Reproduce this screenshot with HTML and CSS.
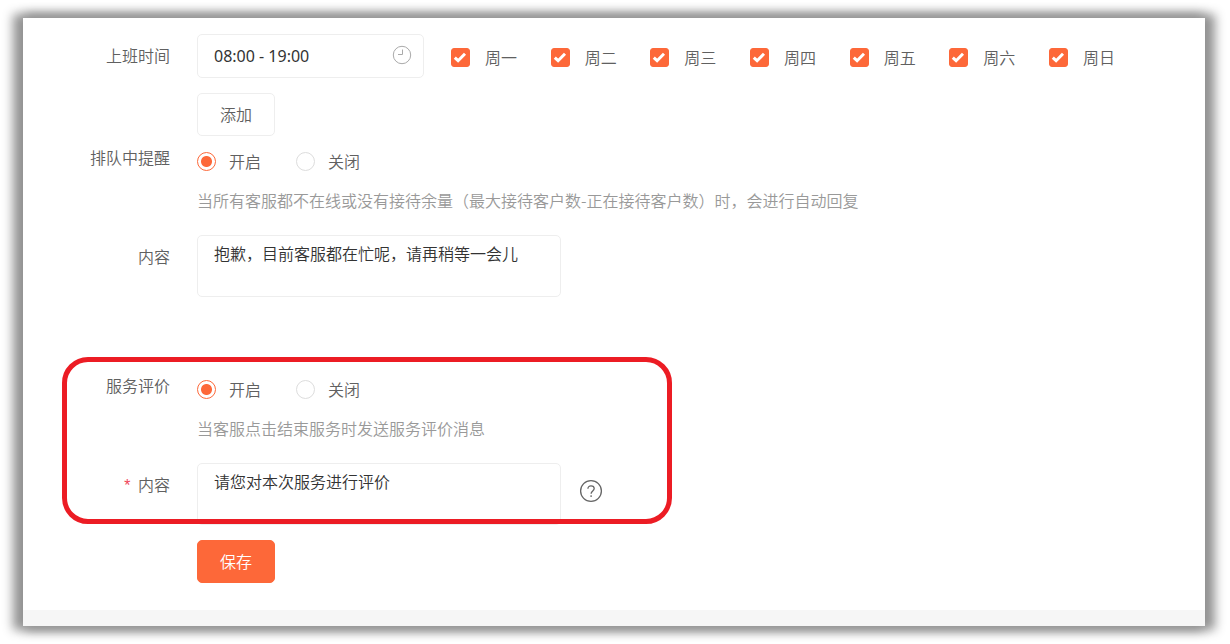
FILE: index.html
```
<!DOCTYPE html>
<html lang="zh-CN">
<head>
    <meta charset="UTF-8">
    <meta name="viewport" content="width=device-width, initial-scale=1.0">
    <title>客服设置</title>
    <link rel="stylesheet" href="styles.css">
</head>
<body>
    <main class="panel">
        <form class="settings">
            <!-- Working hours -->
            <div class="form-row">
                <label class="row-label" for="work-time">上班时间</label>
                <div class="row-body">
                    <div class="time-line">
                        <div class="time-box">
                            <input type="text" id="work-time" value="08:00 - 19:00">
                            <svg class="clock-icon" viewBox="0 0 20 20" fill="none" stroke="#aaa">
                                <circle cx="10" cy="10" r="8.7"/>
                                <path d="M10.5 4.5v5H6"/>
                            </svg>
                        </div>
                        <div class="weekdays">
                            <label><input type="checkbox" checked>周一</label>
                            <label><input type="checkbox" checked>周二</label>
                            <label><input type="checkbox" checked>周三</label>
                            <label><input type="checkbox" checked>周四</label>
                            <label><input type="checkbox" checked>周五</label>
                            <label><input type="checkbox" checked>周六</label>
                            <label><input type="checkbox" checked>周日</label>
                        </div>
                    </div>
                    <button type="button" class="btn">添加</button>
                </div>
            </div>

            <!-- Queue reminder -->
            <section class="group">
                <div class="form-row">
                    <span class="row-label" id="queue-label">排队中提醒</span>
                    <div class="row-body">
                        <div class="radios" role="radiogroup" aria-labelledby="queue-label">
                            <label><input type="radio" name="queue" checked>开启</label>
                            <label><input type="radio" name="queue">关闭</label>
                        </div>
                        <p class="hint">当所有客服都不在线或没有接待余量（最大接待客户数-正在接待客户数）时，会进行自动回复</p>
                    </div>
                </div>
                <div class="form-row content-row">
                    <label class="row-label" for="queue-text">内容</label>
                    <div class="row-body text-line">
                        <textarea id="queue-text">抱歉，目前客服都在忙呢，请再稍等一会儿</textarea>
                    </div>
                </div>
            </section>

            <!-- Service rating -->
            <section class="group highlighted">
                <div class="form-row">
                    <span class="row-label" id="rating-label">服务评价</span>
                    <div class="row-body">
                        <div class="radios" role="radiogroup" aria-labelledby="rating-label">
                            <label><input type="radio" name="rating" checked>开启</label>
                            <label><input type="radio" name="rating">关闭</label>
                        </div>
                        <p class="hint">当客服点击结束服务时发送服务评价消息</p>
                    </div>
                </div>
                <div class="form-row content-row">
                    <label class="row-label" for="rating-text"><span class="required">*</span>内容</label>
                    <div class="row-body text-line">
                        <textarea id="rating-text">请您对本次服务进行评价</textarea>
                        <svg class="help-icon" viewBox="0 0 24 24" fill="none" stroke="#666" stroke-width="1.3">
                            <circle cx="12" cy="12" r="10.4"/>
                            <path d="M8.9 9.8C8.9 7.9 10.2 6.9 12 6.9s3.2 1.1 3.2 2.7c0 2.3-3.1 2.4-3.1 5.1"/>
                            <path d="M12.1 16.3v1.6"/>
                        </svg>
                    </div>
                </div>
            </section>

            <div class="form-row">
                <span></span>
                <div class="row-body">
                    <button type="submit" class="btn btn-primary">保存</button>
                </div>
            </div>
        </form>
        <footer class="panel-footer"></footer>
    </main>
</body>
</html>
```
FILE: styles.css
```
*, *::after {
    box-sizing: border-box;
}

body {
    margin: 0;
    padding: 18px 25px 18px 23px;
    background: #fff;
    color: #606060;
    font-family: "Noto Sans CJK SC", sans-serif;
    font-size: 16px;
    font-weight: 350;
    line-height: 24px;
}

input, textarea, button {
    font: inherit;
    margin: 0;
}

.panel {
    background: #fff;
    box-shadow: -6px 0 10px 4px #949494, 6px 0 10px 4px #949494;
}

.settings {
    padding: 16px 0 27px;
}

.form-row {
    display: grid;
    grid-template-columns: 147px 1fr;
    column-gap: 27px;
}

.row-label {
    line-height: 42px;
    text-align: right;
}

.required {
    margin-right: 6px;
    color: #f0465a;
    font-family: "Liberation Mono", monospace;
    vertical-align: middle;
}

/* Working hours */
.time-line {
    display: flex;
    align-items: center;
    gap: 27px;
    margin-bottom: 15px;
}

.time-box {
    position: relative;
    width: 227px;
}

.time-box input {
    display: block;
    width: 100%;
    height: 44px;
    padding: 0 16px;
    border: 1px solid #eee;
    border-radius: 5px;
    color: #333;
    font-family: "Noto Sans", sans-serif;
    font-weight: 400;
}

.clock-icon {
    position: absolute;
    top: 11px;
    right: 12px;
    width: 20px;
    height: 20px;
}

.weekdays {
    flex: 1;
    display: flex;
    justify-content: space-between;
    padding: 2px 90px 0 0;
}

.weekdays label {
    display: flex;
    align-items: center;
    gap: 15px;
}

input[type="checkbox"] {
    appearance: none;
    width: 19px;
    height: 19px;
    border: 1px solid #ddd;
    border-radius: 3px;
}

input[type="checkbox"]:checked {
    border-color: #fd6839;
    background: #fd6839 url("data:image/svg+xml,%3Csvg xmlns='http://www.w3.org/2000/svg' viewBox='0 0 17 17'%3E%3Cpath d='M2.8 8.6l3.3 3.1 6.9-6.9' fill='none' stroke='white' stroke-width='3'/%3E%3C/svg%3E") center / 17px 17px no-repeat;
}

/* Buttons */
.btn {
    display: block;
    width: 78px;
    height: 43px;
    padding: 0 0 2px;
    border: 1px solid #eee;
    border-radius: 5px;
    background: #fff;
    color: #606060;
    cursor: pointer;
}

.btn-primary {
    border-color: #fd6839;
    background: #fd6839;
    color: #fff;
}

/* Radio groups */
.group {
    margin-bottom: 67px;
}

.radios {
    display: flex;
    gap: 35px;
    height: 50px;
}

.radios label {
    display: flex;
    align-items: center;
    gap: 13px;
}

input[type="radio"] {
    appearance: none;
    width: 19px;
    height: 19px;
    border: 1px solid #ddd;
    border-radius: 50%;
}

input[type="radio"]:checked {
    border-color: #fd6839;
    background: radial-gradient(circle, #fd6839 5px, transparent 6px);
}

.hint {
    margin: 0;
    color: #999;
    line-height: 28px;
}

.content-row {
    margin-top: 21px;
}

.text-line {
    display: flex;
    gap: 18px;
}

textarea {
    display: block;
    width: 364px;
    height: 62px;
    padding: 5px 16px;
    border: 1px solid #eee;
    border-radius: 5px;
    color: #333;
    resize: none;
}

.help-icon {
    width: 24px;
    height: 24px;
    margin-top: 16px;
}

/* Red frame drawn over the rating settings */
.highlighted {
    position: relative;
    margin-bottom: 15px;
}

.highlighted::after {
    content: "";
    position: absolute;
    top: -7px;
    bottom: 1px;
    left: 39px;
    width: 610px;
    border: 5px solid #ec1c24;
    border-radius: 26px;
    pointer-events: none;
}

.panel-footer {
    height: 16px;
    background: #f6f6f6;
}
```
